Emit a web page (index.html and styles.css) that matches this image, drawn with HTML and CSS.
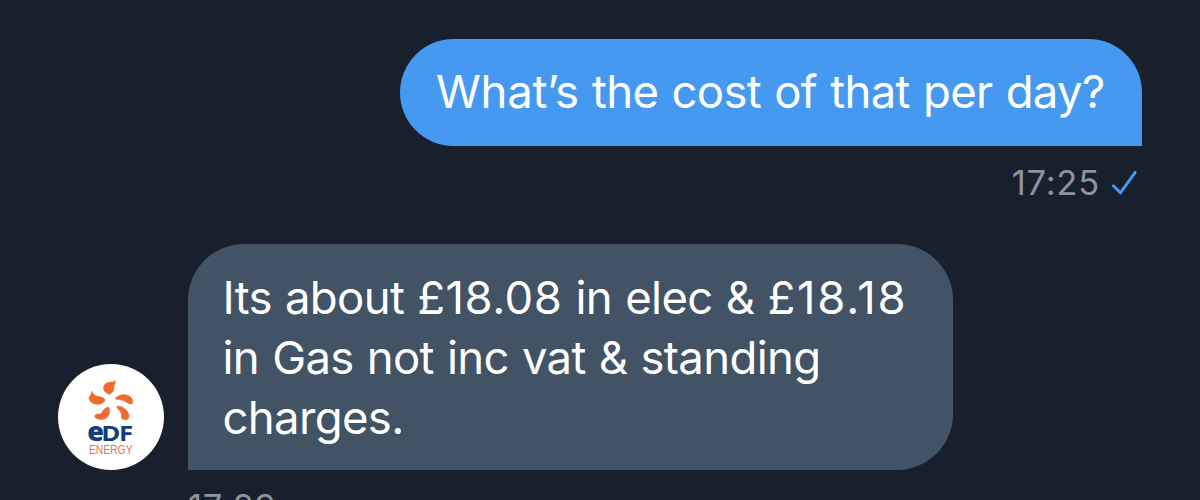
FILE: index.html
```html
<!DOCTYPE html>
<html lang="en">
<head>
<meta charset="utf-8">
<title>Messages</title>
<link rel="stylesheet" href="styles.css">
</head>
<body>
<main class="chat">
  <section class="sent">
    <p class="bubble bubble-sent"><span class="line"><span class="opening">What’s</span> the cost of that per day?</span></p>
    <div class="meta">
      <time class="time">17:25</time>
      <svg class="check" viewBox="0 0 28 28"><path d="M3.4 16.8 10.4 23.8 25.2 3.4"/></svg>
    </div>
  </section>
  <section class="received">
    <svg class="avatar" viewBox="0 0 106 106" role="img" aria-label="EDF Energy">
      <circle class="disc" cx="53" cy="53" r="53"/>
      <g class="petals">
        <path d="M57.2 16.4C56.6 18.2 55.4 18 53.3 18C48.5 18 45.3 20.8 45.5 24.3C45.7 27.4 48.6 29.2 51.2 30.4C54 29 56 27.3 55.7 24.5C55.5 21.2 57.6 20.5 57.2 16.4Z"/>
        <path d="M33.9 27.3C34.6 29.6 36.5 31.5 39.2 32.2C42.4 33 46 33 47 36C46.2 38.9 43 40.4 39.4 40.2C35.2 39.9 31.4 37.7 31 34.4C30.8 32 33.7 31.2 33.9 27.3Z"/>
        <path d="M57 34.6C59 32 62.8 30.4 66.7 30.7C71.1 31 74.5 33.7 74.9 37.3C75 39.3 73.8 40.3 71.8 40C69.5 39.6 68.5 37.8 65.6 36.6C62.6 35.4 59.4 36 57 34.6Z"/>
        <path d="M51 43.3C52.2 47.3 51.5 51 49 53.4C46 56.1 40.2 56 37.6 53.7C36.3 52.4 36.8 50.8 38.5 50.3C40.3 49.8 42.2 50.5 43.6 48.7C45.7 46.2 46.4 43.3 51 43.3Z"/>
        <path d="M58.8 42.3C62.4 41.6 66.1 43.5 68.6 46.5C71.1 49.4 71.7 52.8 70.3 54.6C69.1 56 66.6 56.3 64.6 55.1C62.6 53.8 64.1 51.6 62.9 48.7C61.9 46.2 58.8 45 58.8 42.3Z"/>
      </g>
      <text class="logo-e" x="29.3" y="77">e</text>
      <text class="logo-df" transform="translate(43.2 77) scale(1.2 1)">DF</text>
      <text class="logo-energy" x="31" y="89.8" textLength="43.5" lengthAdjust="spacingAndGlyphs">ENERGY</text>
    </svg>
    <div class="reply">
      <p class="bubble bubble-received">
        <span class="line">Its about <span class="price-elec">£18.08</span> in elec &amp; <span class="price-gas">£18.18</span></span>
        <span class="line">in Gas not inc vat &amp; standing</span>
        <span class="line">charges.</span>
      </p>
      <time class="time time-reply">17:29</time>
    </div>
  </section>
</main>
</body>
</html>
```
FILE: styles.css
```css
* { box-sizing: border-box; }

body {
  margin: 0;
  background: #18202d;
  font-family: Inter, "Liberation Sans", sans-serif;
}

.chat {
  height: 500px;
  padding: 39px 58px 0;
  overflow: hidden;
}

.sent {
  display: flex;
  flex-direction: column;
  align-items: flex-end;
  height: 205px;
}

.bubble {
  margin: 0;
  color: #fff;
  font-size: 45.5px;
  line-height: 60px;
  letter-spacing: -0.7px;
  word-spacing: 1.2px;
}

.bubble-sent {
  width: 742px;
  height: 107px;
  padding: 23px 36px 0;
  border-radius: 54px 54px 0 54px;
  background: #4599f0;
}

.line {
  display: block;
  white-space: nowrap;
}

.opening { letter-spacing: -0.3px; }
.price-elec { letter-spacing: 0.5px; }
.price-gas { letter-spacing: 1.8px; }

.meta {
  display: flex;
  align-items: center;
  gap: 10px;
  height: 40px;
  margin-top: 17px;
  padding-right: 4px;
}

.time {
  color: #8a94a2;
  font-size: 34.5px;
  line-height: 40px;
  letter-spacing: 0.8px;
}

.check {
  width: 28px;
  height: 28px;
  fill: none;
  stroke: #4599f0;
  stroke-width: 3;
  stroke-linecap: round;
}

.received {
  display: flex;
  gap: 24px;
}

.avatar {
  width: 106px;
  height: 106px;
  margin-top: 120px;
}

.disc { fill: #fff; }

.petals {
  fill: #ed6b2d;
  stroke: #ed6b2d;
  stroke-width: 0.6;
}

.logo-e, .logo-df {
  fill: #173c7c;
  font-family: "Open Sans", sans-serif;
  font-weight: 800;
}

.logo-e { font-size: 27px; }

.logo-df {
  font-size: 21.5px;
  font-weight: 700;
  letter-spacing: -1px;
}

.logo-energy {
  fill: #e2783f;
  font-family: "Liberation Sans", sans-serif;
  font-size: 12.3px;
}

.bubble-received {
  width: 765px;
  height: 226px;
  padding: 24px 34.5px 0;
  border-radius: 56px 56px 56px 0;
  background: #415364;
  letter-spacing: -0.65px;
  word-spacing: 0.9px;
}

.time-reply {
  display: block;
  margin-top: 17px;
}
```
